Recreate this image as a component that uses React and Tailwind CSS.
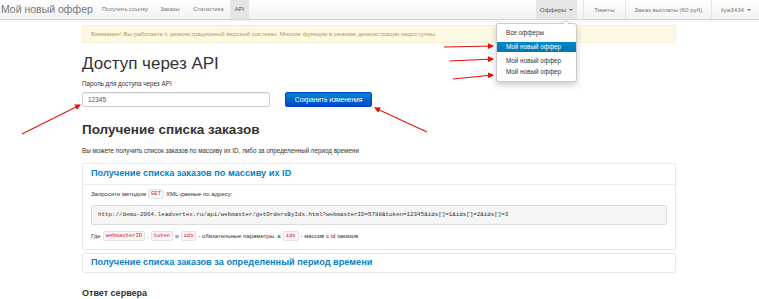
import React from "react";

function Code({ children }) {
  return (
    <span className="inline-block rounded-[2px] border border-[#e1e1e8] bg-[#f7f7f9] px-[2px] font-['Liberation_Mono',monospace] text-[5.5px] leading-[8px] text-[#dd1144]">
      {children}
    </span>
  );
}

function Caret() {
  return (
    <span className="ml-[3px] inline-block h-0 w-0 border-x-[2px] border-t-[2.5px] border-x-transparent border-t-[#777] align-middle" />
  );
}

export default function App() {
  return (
    <div className="relative h-[299px] w-[759px] overflow-hidden bg-white font-['Liberation_Sans',Arial,sans-serif] text-[#333]">
      {/* Navbar */}
      <div className="flex h-[20px] items-stretch border-b border-[#d4d4d4] bg-gradient-to-b from-white to-[#f2f2f2] shadow-[0_1px_3px_rgba(0,0,0,0.06)]">
        <div className="flex w-[97px] items-center pl-[1px] text-[10.5px] text-[#777]">Мой новый оффер</div>
        <div className="flex items-stretch text-[5.8px] text-[#777]">
          <div className="flex w-[56px] items-center justify-center">Получить ссылку</div>
          <div className="flex w-[34px] items-center justify-center">Заказы</div>
          <div className="flex w-[43px] items-center justify-center">Статистика</div>
          <div className="flex w-[19px] items-center justify-center bg-[#e5e5e5] text-[#555]">API</div>
        </div>
        <div className="ml-auto flex items-stretch text-[6.2px] text-[#777]">
          <div className="relative flex w-[41px] items-center justify-center bg-[#e5e5e5] text-[#555]">
            Офферы
            <Caret />
            {/* dropdown */}
            <div className="absolute left-[-40px] top-[23px] z-10 w-[81px] rounded-[3px] border border-[rgba(0,0,0,0.2)] bg-white pb-[4px] pt-[4px] text-[6.3px] text-[#333] shadow-[0_3px_6px_rgba(0,0,0,0.2)]">
              <div className="absolute right-[6px] top-[-4px] h-0 w-0 border-x-[4px] border-b-[4px] border-x-transparent border-b-[rgba(0,0,0,0.2)]" />
              <div className="absolute right-[7px] top-[-3px] h-0 w-0 border-x-[3px] border-b-[3px] border-x-transparent border-b-white" />
              <div className="flex h-[10px] items-center pl-[9px]">Все офферы</div>
              <div className="mt-[4px] flex h-[10px] items-center bg-gradient-to-b from-[#0088cc] to-[#0077b3] pl-[9px] text-white">Мой новый оффер</div>
              <div className="mt-[4px] flex h-[10px] items-center pl-[9px]">Мой новый оффер</div>
              <div className="mt-[1px] flex h-[10px] items-center pl-[9px]">Мой новый оффер</div>
            </div>
          </div>
          <div className="ml-[6px] w-px bg-[#e6e6e6]" />
          <div className="flex w-[41px] items-center justify-center">Тикеты</div>
          <div className="w-px bg-[#e6e6e6]" />
          <div className="flex w-[85px] items-center justify-center">Заказ выплаты (60 руб)</div>
          <div className="w-px bg-[#e6e6e6]" />
          <div className="flex w-[47px] items-center pl-[9px]">
            ilya3434
            <Caret />
          </div>
        </div>
      </div>

      {/* Main */}
      <div className="ml-[82px] w-[594px]">
        <div className="mt-[5px] flex h-[18px] items-center rounded-[2px] border border-[#fbeed5] bg-[#fcf8e3] pl-[8px] text-[6.2px] text-[#c09853]">
          Внимание! Вы работаете с демонстрационной версией системы. Многие функции в режиме демонстрации недоступны
        </div>

        <h1 className="mt-[10px] text-[17px] leading-[22px] font-normal text-[#333]">Доступ через API</h1>
        <div className="mt-[4px] text-[6.3px] leading-[9px]">Пароль для доступа через API</div>

        <div className="mt-[4px] flex items-center">
          <div className="flex h-[15px] w-[188px] items-center rounded-[2px] border border-[#cccccc] pl-[5px] text-[6.5px] text-[#555] shadow-[inset_0_1px_1px_rgba(0,0,0,0.075)]">
            12345
          </div>
          <div className="ml-[15px] flex h-[15px] w-[87px] items-center justify-center rounded-[2px] border border-[#0044cc] bg-gradient-to-b from-[#0088cc] to-[#0044cc] text-[6.6px] text-white">
            Сохранить изменения
          </div>
        </div>

        <h2 className="mt-[14px] text-[13.5px] leading-[18px] font-bold text-[#333]">Получение списка заказов</h2>
        <div className="mt-[7px] text-[6.3px] leading-[9px]">
          Вы можете получить список заказов по массиву их ID, либо за определенный период времени
        </div>

        <div className="mt-[8px] rounded-[2px] border border-[#e8e8e8]">
          <div className="flex h-[21px] items-center border-b border-[#ededed] pl-[8px] text-[9.2px] font-bold text-[#0a7fc4]">
            Получение списка заказов по массиву их ID
          </div>
          <div className="px-[8px] pb-[8px]">
            <div className="mt-[4px] flex items-center gap-[2px] text-[6px] leading-[10px]">
              Запросите методом <Code>GET</Code> XML-данные по адресу:
            </div>
            <div className="mt-[6px] flex h-[20px] items-center rounded-[2px] border border-[#dcdcdc] bg-[#f5f5f5] pl-[6px] font-['Liberation_Mono',monospace] text-[5.85px] text-[#333]">
              http://demo-2064.leadvertex.ru/api/webmaster/getOrdersByIds.html?webmasterID=5788&amp;token=12345&amp;ids[]=1&amp;ids[]=2&amp;ids[]=3
            </div>
            <div className="mt-[6px] flex items-center gap-[2px] text-[6px] leading-[10px]">
              Где <Code>webmasterID</Code>, <Code>token</Code> и <Code>ids</Code> - обязательные параметры, а <Code>ids</Code> - массив с id заказов
            </div>
          </div>
        </div>

        <div className="mt-[3px] flex h-[20px] items-center rounded-[2px] border border-[#e8e8e8] pl-[8px] text-[9.2px] font-bold text-[#0a7fc4]">
          Получение списка заказов за определенный период времени
        </div>

        <div className="mt-[14px] text-[9px] font-bold leading-[12px] text-[#333]">Ответ сервера</div>
      </div>

      {/* Annotation arrows */}
      <svg className="pointer-events-none absolute left-0 top-0" width="759" height="299">
        <defs>
          <marker id="ah" markerWidth="6" markerHeight="6" refX="5" refY="3" orient="auto" markerUnits="userSpaceOnUse">
            <path d="M0,0 L6,3 L0,6 Z" fill="#e5120a" />
          </marker>
        </defs>
        <g stroke="#e5120a" strokeWidth="1.1" fill="none">
          <line x1="22" y1="134" x2="80" y2="105" markerEnd="url(#ah)" />
          <line x1="427" y1="132" x2="375" y2="108" markerEnd="url(#ah)" />
          <line x1="444" y1="47" x2="493" y2="46" markerEnd="url(#ah)" />
          <line x1="450" y1="61" x2="493" y2="59" markerEnd="url(#ah)" />
          <line x1="453" y1="79" x2="493" y2="75" markerEnd="url(#ah)" />
        </g>
      </svg>
    </div>
  );
}
